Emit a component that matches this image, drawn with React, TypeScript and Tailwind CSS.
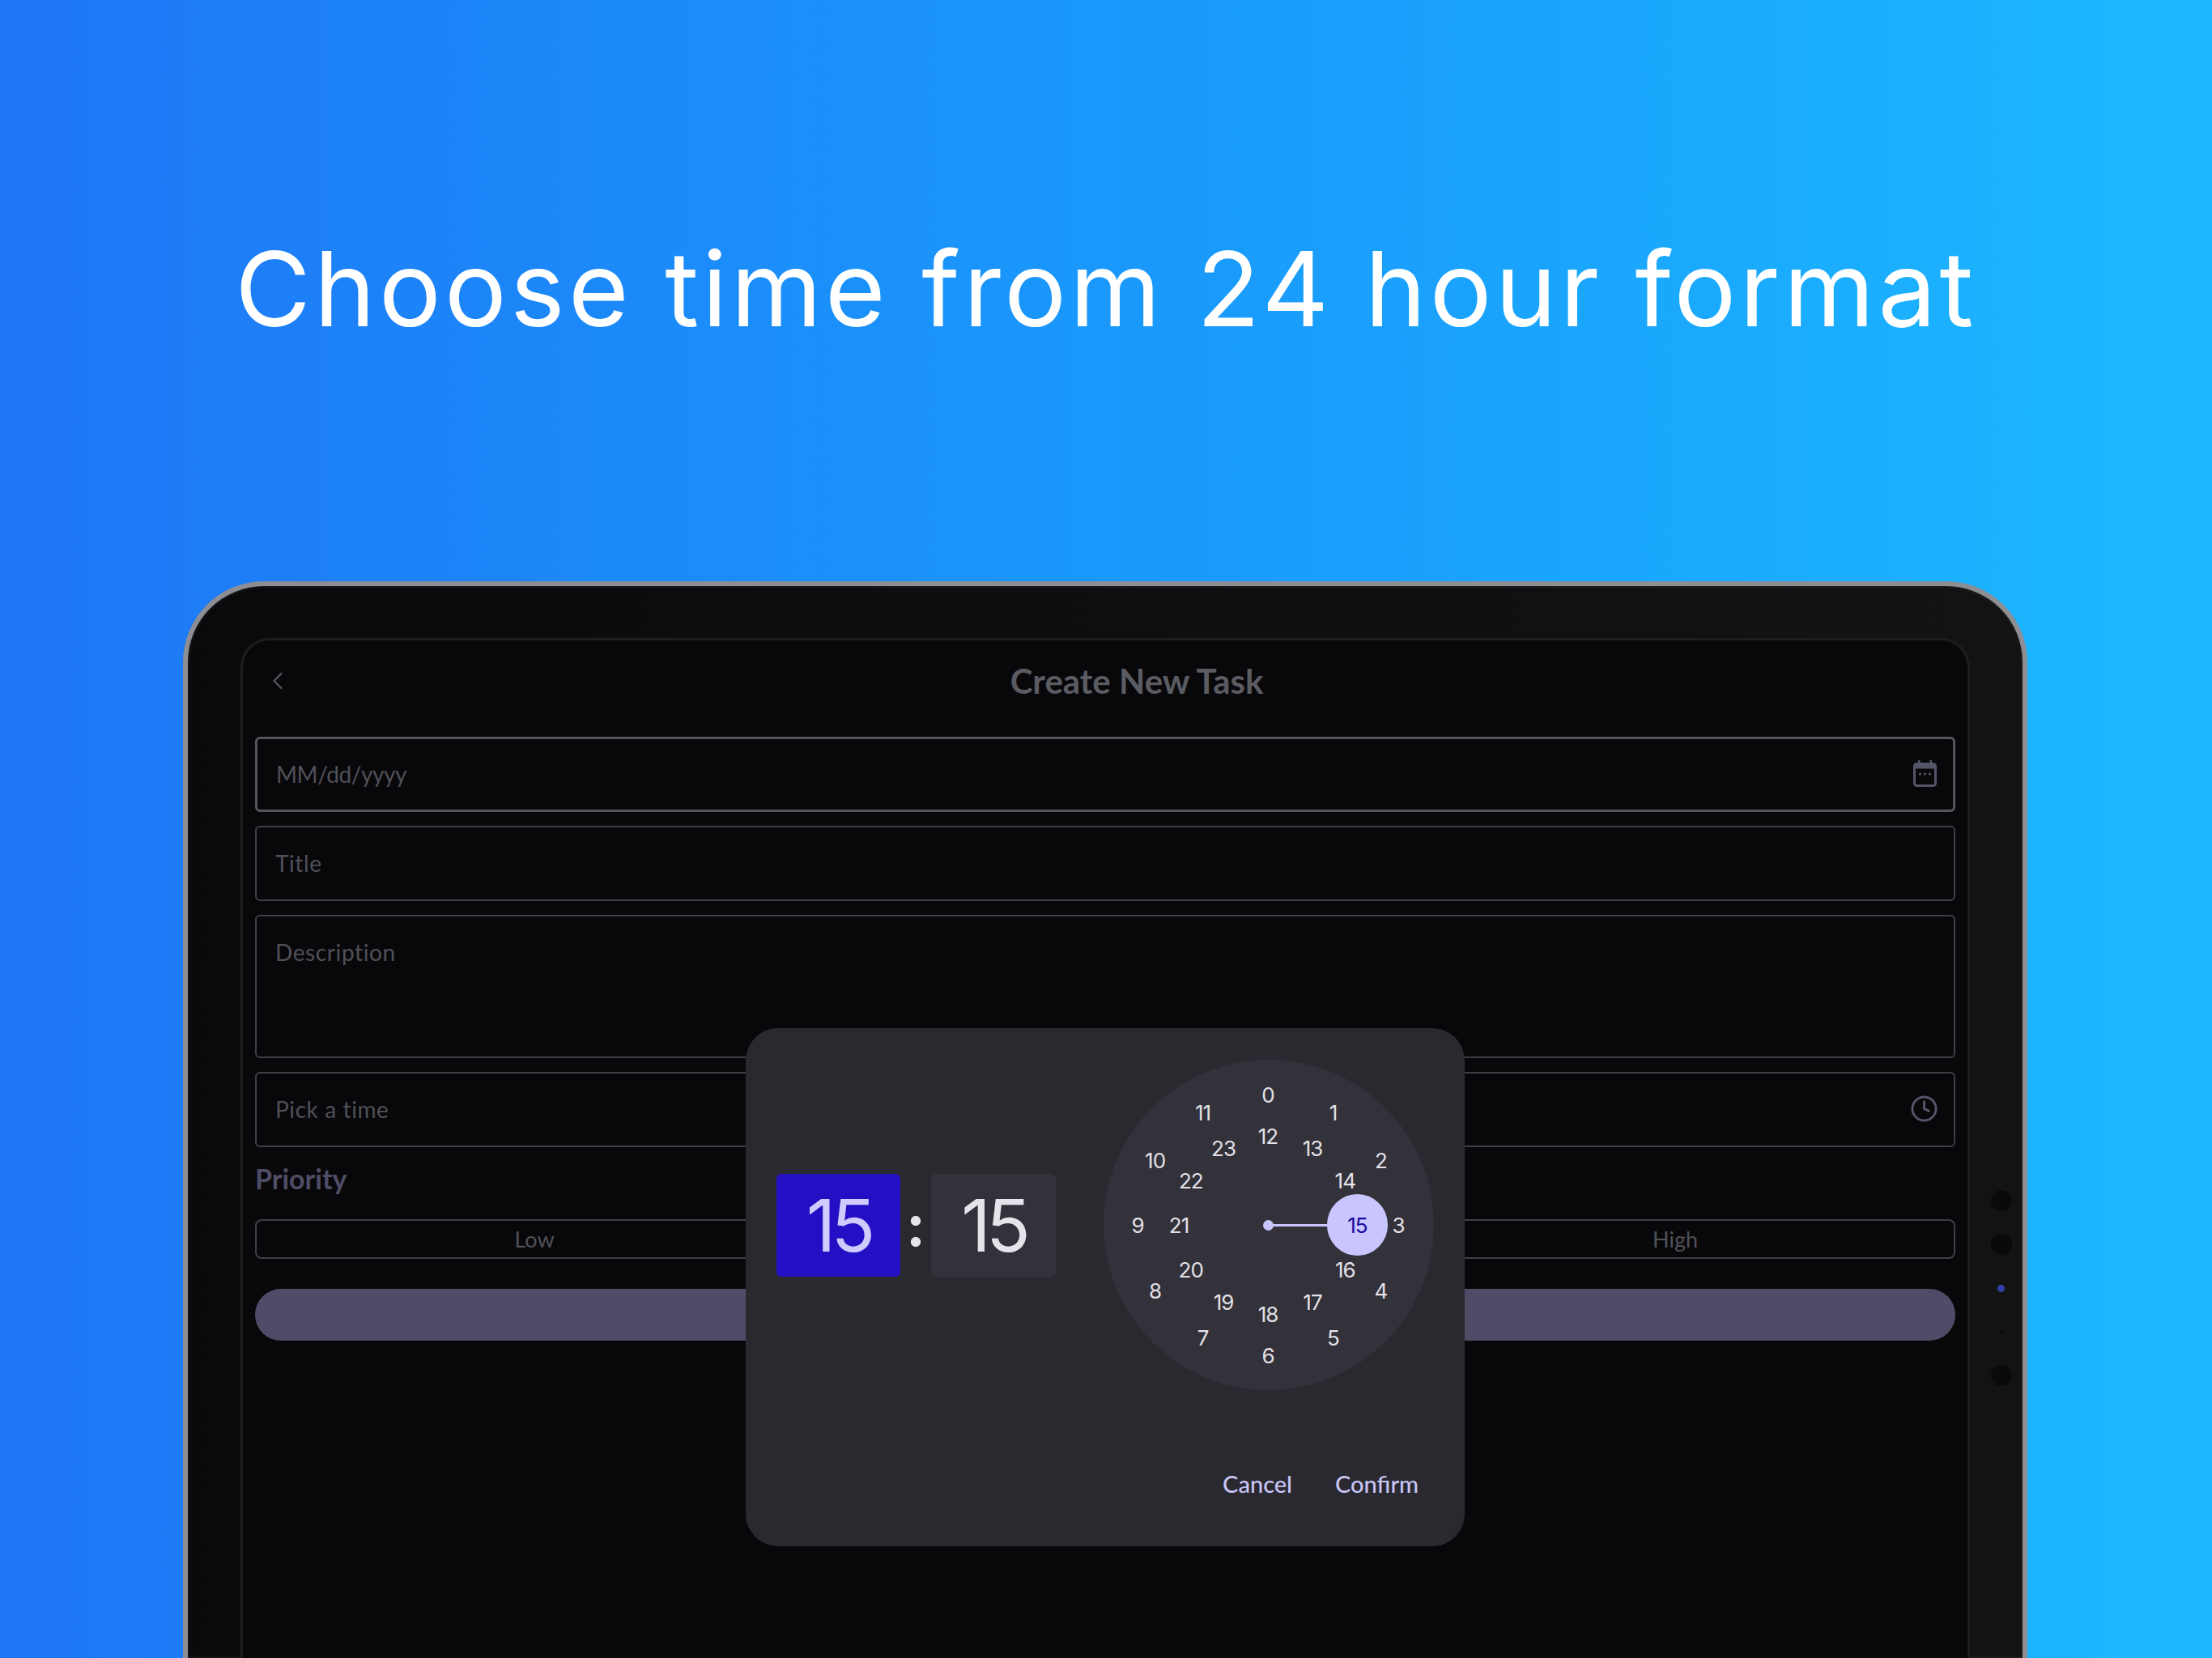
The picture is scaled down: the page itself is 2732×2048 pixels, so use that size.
import { ChevronLeft, Clock } from 'lucide-react';

const outerHours = [0, 1, 2, 3, 4, 5, 6, 7, 8, 9, 10, 11];
const innerHours = [12, 13, 14, 15, 16, 17, 18, 19, 20, 21, 22, 23];

const DIAL_X = 203;
const DIAL_Y = 205;

const DialNumber = ({ value, radius, index }: { value: number; radius: number; index: number }) => {
  const angle = (index * Math.PI) / 6;
  return (
    <span
      className="absolute -translate-x-1/2 -translate-y-1/2 font-[Inter,sans-serif] text-[26px] font-normal leading-none tracking-[-1px] text-[#e4e1e8]"
      style={{
        left: DIAL_X + radius * Math.sin(angle),
        top: DIAL_Y - radius * Math.cos(angle),
      }}
    >
      {value}
    </span>
  );
};

const CalendarIcon = () => (
  <svg width="29" height="33" viewBox="0 0 29 33" fill="none">
    <path d="M6 0h2.500v5H6zM20.500 0H23v5h-2.500z" fill="#55556a" />
    <rect x="1.500" y="4.500" width="26" height="27" rx="3" stroke="#55556a" strokeWidth="3" />
    <rect x="1.500" y="4.500" width="26" height="6" fill="#55556a" />
    <circle cx="8.500" cy="17" r="1.600" fill="#55556a" />
    <circle cx="14.500" cy="17" r="1.600" fill="#55556a" />
    <circle cx="20.500" cy="17" r="1.600" fill="#55556a" />
  </svg>
);

const Field = ({ label, active, icon }: { label: string; active?: boolean; icon?: React.ReactNode }) => (
  <div
    className={`flex h-[93px] items-center justify-between rounded-md border-2 pl-[23px] pr-[20px] pb-[2px] text-[28px] text-[#505058] ${
      active ? 'border-[3px] border-[#555560] tracking-[-0.4px]' : 'border-[#3f3f47] tracking-[0.6px]'
    }`}
  >
    <span>{label}</span>
    {icon}
  </div>
);

const TimePicker = () => (
  <div className="absolute left-[921px] top-[1270px] flex h-[640px] w-[888px] flex-col rounded-[40px] bg-[#2a2930] px-[38px] pb-[63px] pt-[39px]">
    <div className="flex items-center justify-between">
      <div className="flex items-center font-[Inter,sans-serif]">
        <div className="flex h-[127px] w-[153px] items-center justify-center rounded-md bg-[#2310c4] pt-[2px] text-[90px] font-normal leading-none tracking-[-6px] text-[#cfcbff]">
          15
        </div>
        <div className="flex w-[38px] justify-center text-[72px] font-bold leading-none text-[#e6e3ea]">:</div>
        <div className="flex h-[127px] w-[154px] items-center justify-center rounded-md bg-[#33323a] pt-[2px] text-[90px] font-normal leading-none tracking-[-6px] text-[#e6e3ea]">
          15
        </div>
      </div>
      <div className="relative h-[408px] w-[408px] rounded-full bg-[#33323a]">
        {outerHours.map((h, i) => (
          <DialNumber key={h} value={h} radius={161} index={i} />
        ))}
        {innerHours.filter((h) => h !== 15).map((h) => (
          <DialNumber key={h} value={h} radius={110} index={h - 12} />
        ))}
        <div className="absolute left-[197px] top-[198px] h-[13px] w-[13px] rounded-full bg-[#c8c5ff]" />
        <div className="absolute left-[203px] top-[203px] h-[3px] w-[76px] bg-[#c8c5ff]" />
        <div className="absolute left-[276px] top-[166px] flex h-[76px] w-[75px] items-center justify-center rounded-full bg-[#c8c5ff] font-[Inter,sans-serif] text-[26px] tracking-[-1px] text-[#1c0aa0]">
          15
        </div>
      </div>
    </div>
    <div className="mt-auto flex justify-end gap-[53px] pr-[19px] text-[29px] font-medium leading-none text-[#c8c5f5]">
      <span>Cancel</span>
      <span>Confirm</span>
    </div>
  </div>
);

export default function App() {
  return (
    <div className="relative flex h-[2048px] w-[2732px] flex-col overflow-hidden bg-linear-to-r from-[#1f76f6] to-[#1db8ff] font-[Lato,sans-serif]">
      <div className="flex h-[718px] shrink-0 justify-center pt-[277px]">
        <h1 className="h-[160px] whitespace-nowrap font-[Inter,sans-serif] text-[128px] font-normal leading-[160px] tracking-[4.3px] text-white">
          Choose time from 24 hour format
        </h1>
      </div>

      <div className="ml-[226px] flex w-[2278px] flex-1 rounded-t-[100px] border-[6px] border-b-0 border-[#8c8e94] bg-linear-to-r from-[#0a0a0c] to-[#131314] pl-[65px] pt-[64px] shadow-[inset_0_0_4px_#2a2a2c]">
        <div className="flex w-[2136px] flex-col rounded-t-[36px] border-[3px] border-b-0 border-[#1e1e21] bg-[#08080a] px-[15px]">
          <div className="mb-[19px] flex h-[100px] items-center">
            <div className="w-[78px] pl-[10px]">
              <ChevronLeft size={36} strokeWidth={1.6} className="text-[#55555c]" />
            </div>
            <div className="flex-1 text-center text-[42px] font-bold text-[#5b5b62]">Create New Task</div>
          </div>

          <div className="flex flex-col gap-[17px]">
            <Field label="MM/dd/yyyy" active icon={<CalendarIcon />} />
            <Field label="Title" />
            <div className="h-[177px] rounded-md border-2 border-[#3f3f47] pl-[23px] pr-[20px] pt-[23px] text-[28px] tracking-[0.6px] text-[#505058]">
              Description
            </div>
            <Field
              label="Pick a time"
              icon={<Clock size={35} strokeWidth={2} className="-mr-[1px] text-[#55556a]" />}
            />
          </div>

          <div className="mt-[19px] text-[34px] font-bold leading-[40px] text-[#4f4d66]">Priority</div>

          <div className="mt-[30px] flex h-[49px] items-center rounded-lg border-2 border-[#3f3f47] pt-[2px] text-[27px] text-[#505058]">
            <span className="w-[686px] text-center">Low</span>
            <span className="ml-auto w-[688px] text-center">High</span>
          </div>

          <div className="mt-[37px] h-[64px] rounded-full bg-[#4e4c67]" />
        </div>

        <div className="flex flex-1 flex-col items-center gap-[28px] pl-3 pt-[682px]">
          <div className="h-[26px] w-[26px] rounded-full bg-[#0a0a0b]" />
          <div className="h-[26px] w-[26px] rounded-full bg-[#0a0a0b]" />
          <div className="flex h-[26px] items-center">
            <div className="h-[9px] w-[9px] rounded-full bg-[#3340a8]" />
          </div>
          <div className="flex h-[26px] items-center">
            <div className="h-[4px] w-[4px] rounded-full bg-[#0a0a0b]" />
          </div>
          <div className="h-[26px] w-[26px] rounded-full bg-[#0a0a0b]" />
        </div>
      </div>

      <TimePicker />
    </div>
  );
}
